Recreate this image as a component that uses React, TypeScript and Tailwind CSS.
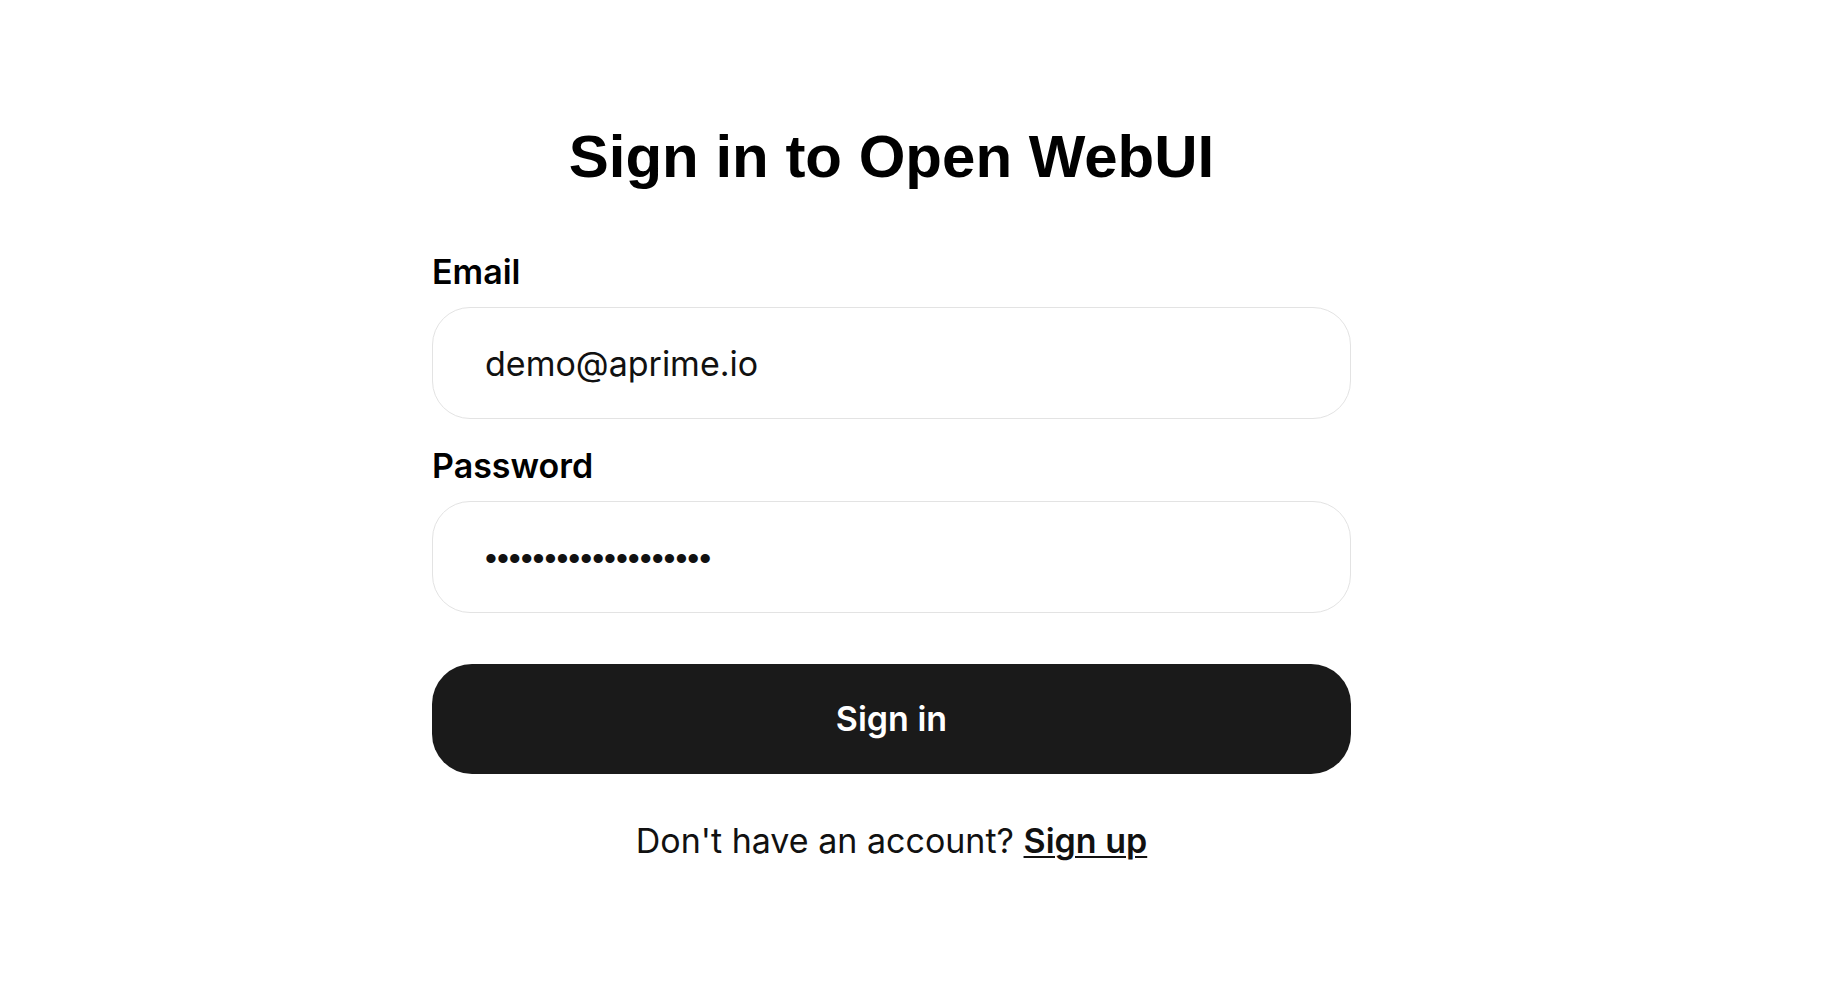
import { useState } from 'react';

export default function App() {
  const [email, setEmail] = useState('demo@aprime.io');
  const [password, setPassword] = useState('demopassword1234567');

  return (
    <main className="min-h-screen w-full bg-white font-['Inter',sans-serif] text-black">
      <div className="flex justify-center pr-[47px] pt-[127px]">
        <form
          className="flex w-[919px] flex-col"
          onSubmit={(e) => e.preventDefault()}
        >
          <h1 className="text-center font-['Liberation_Sans',Arial,sans-serif] text-[60px] font-bold leading-[60px]">
            Sign in to Open WebUI
          </h1>

          <label className="mt-[65px] text-[34px] font-semibold leading-[40px]">
            Email
          </label>
          <input
            type="email"
            value={email}
            onChange={(e) => setEmail(e.target.value)}
            className="mt-[15px] h-[112px] w-full rounded-[38px] border border-[#e3e3e3] bg-white pl-[52px] pr-8 text-[34px] leading-[40px] text-[#111] outline-none"
          />

          <label className="mt-[27px] text-[34px] font-semibold leading-[40px]">
            Password
          </label>
          <input
            type="password"
            value={password}
            onChange={(e) => setPassword(e.target.value)}
            className="mt-[15px] h-[112px] w-full rounded-[38px] border border-[#e3e3e3] bg-white pl-[52px] pr-8 pt-[3px] font-['Liberation_Sans',Arial,sans-serif] text-[34px] leading-[40px] text-[#111] outline-none"
          />

          <button
            type="submit"
            className="mt-[51px] h-[110px] w-full rounded-[40px] bg-[#1a1a1a] text-[34px] font-semibold leading-[40px] text-white"
          >
            Sign in
          </button>

          <p className="mt-[47px] text-center text-[34px] leading-[40px] text-[#111]">
            Don't have an account?{' '}
            <a
              href="#"
              className="font-semibold underline decoration-2 underline-offset-[3px]"
            >
              Sign up
            </a>
          </p>
        </form>
      </div>
    </main>
  );
}
